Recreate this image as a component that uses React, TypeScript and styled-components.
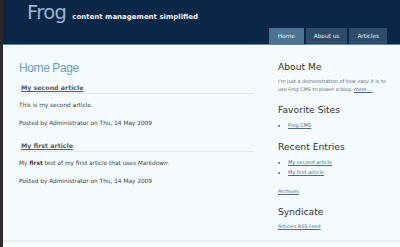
import styled, { createGlobalStyle } from 'styled-components'

const GlobalStyle = createGlobalStyle`
  html, body {
    margin: 0;
    padding: 0;
    background: #f5fbfd;
  }
  body {
    font-family: 'DejaVu Sans', Verdana, sans-serif;
    color: #444;
  }
`

const tabs = ['Home', 'About us', 'Articles']

export default function App() {
  return (
    <>
      <GlobalStyle />
      <Page>
        <Header>
          <Brand>
            <Logo>Frog</Logo>
            <Tagline>content management simplified</Tagline>
          </Brand>
          <Nav>
            {tabs.map((t, i) => (
              <Tab key={t} $active={i === 0}>
                {t}
              </Tab>
            ))}
          </Nav>
        </Header>
        <Body>
          <Main>
            <PageTitle>Home Page</PageTitle>
            <Article>
              <ArticleTitle>
                <a href="#">My second article</a>
              </ArticleTitle>
              <Para>This is my second article.</Para>
              <Para>Posted by Administrator on Thu, 14 May 2009</Para>
            </Article>
            <Article>
              <ArticleTitle>
                <a href="#">My first article</a>
              </ArticleTitle>
              <Para>
                My <strong>first</strong> test of my first article that uses{' '}
                <em>Markdown</em>.
              </Para>
              <Para>Posted by Administrator on Thu, 14 May 2009</Para>
            </Article>
          </Main>
          <Sidebar>
            <SideTitle>About Me</SideTitle>
            <SideText>
              I'm just a demonstration of how easy it is to use Frog CMS to
              power a blog. <a href="#">more&nbsp;...</a>
            </SideText>
            <SideTitle>Favorite Sites</SideTitle>
            <List $top={0} $gap={11}>
              <li>
                <a href="#">Frog CMS</a>
              </li>
            </List>
            <SideTitle>Recent Entries</SideTitle>
            <List $top={3} $gap={10}>
              <li>
                <a href="#">My second article</a>
              </li>
              <li>
                <a href="#">My first article</a>
              </li>
            </List>
            <SideText $gap={11}>
              <a href="#">Archives</a>
            </SideText>
            <SideTitle>Syndicate</SideTitle>
            <SideText>
              <a href="#">Articles RSS Feed</a>
            </SideText>
          </Sidebar>
        </Body>
        <Footer />
      </Page>
    </>
  )
}

const Page = styled.div`
  border-left: 3px solid #2b2b2e;
  height: 247px;
  box-sizing: border-box;
  overflow: hidden;
`

const Header = styled.div`
  height: 44px;
  background: #0b2748;
  border-bottom: 1px solid #5f86a8;
  display: flex;
  justify-content: space-between;
  align-items: flex-start;
  padding-left: 24px;
  padding-right: 13px;
`

const Brand = styled.div`
  display: flex;
  align-items: baseline;
  gap: 6px;
  padding-top: 1px;
`

const Logo = styled.div`
  font-family: 'DejaVu Sans', sans-serif;
  font-size: 19.5px;
  letter-spacing: -0.6px;
  color: #9bb3cb;
`

const Tagline = styled.div`
  font-size: 7px;
  font-weight: bold;
  color: #f2f6fa;
`

const Nav = styled.div`
  align-self: flex-end;
  display: flex;
  gap: 2px;
`

const Tab = styled.div<{ $active?: boolean }>`
  height: 16px;
  line-height: 16px;
  padding: 0 8px;
  min-width: 19px;
  text-align: center;
  font-size: 5.8px;
  color: #e6eef5;
  background: ${({ $active }) => ($active ? '#4b7292' : '#2d4c6b')};
`

const Body = styled.div`
  display: grid;
  grid-template-columns: 235px 1fr;
  gap: 24px;
  padding: 16px 10px 0 16px;
  height: 179px;
`

const Main = styled.div``

const PageTitle = styled.h1`
  margin: 0 0 9px;
  font-family: 'Liberation Sans', sans-serif;
  font-weight: normal;
  font-size: 12px;
  letter-spacing: -0.4px;
  color: #6b9dca;
`

const Article = styled.div`
  margin-bottom: 16px;
`

const ArticleTitle = styled.h2`
  margin: 0 0 8px;
  padding: 0 0 2px 2px;
  border-bottom: 1px solid #e1e9ee;
  font-size: 6.3px;
  font-weight: bold;

  a {
    color: #5a5a5a;
  }
`

const Para = styled.p`
  margin: 0 0 12px;
  font-size: 5.8px;
  color: #3d3d40;
`

const Sidebar = styled.div``

const SideTitle = styled.h3`
  margin: 0 0 4px;
  font-size: 9.2px;
  line-height: 12px;
  font-weight: normal;
  color: #333;
`

const SideText = styled.p<{ $gap?: number }>`
  margin: 0 0 ${({ $gap }) => $gap ?? 11}px;
  font-size: 4.9px;
  line-height: 8px;
  color: #56707f;

  a {
    color: #4a6c8c;
  }
`

const List = styled.ul<{ $top?: number; $gap?: number }>`
  margin: ${({ $top }) => $top ?? 0}px 0 ${({ $gap }) => $gap ?? 9}px;
  padding-left: 10px;
  font-size: 5px;
  line-height: 10px;
  color: #4a6c8c;

  a {
    color: #4a6c8c;
  }
`

const Footer = styled.div`
  border-top: 2px solid #e7eded;
`
